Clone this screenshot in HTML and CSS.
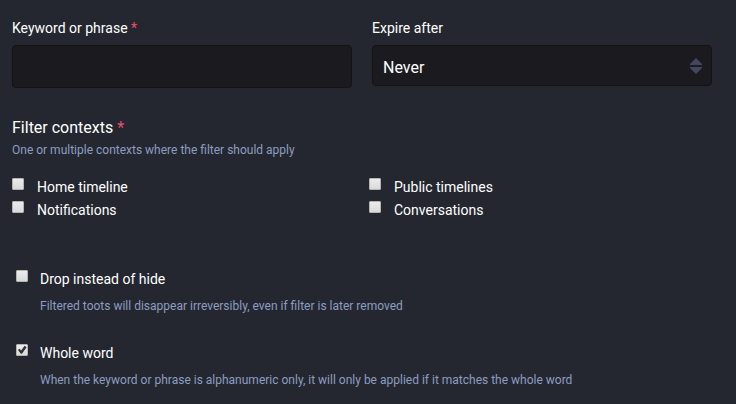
FILE: index.html
```html
<!DOCTYPE html>
<html lang="en">
<head>
<meta charset="utf-8">
<meta name="viewport" content="width=device-width, initial-scale=1">
<title>Edit filter</title>
<link rel="stylesheet" href="styles.css">
</head>
<body>
<form class="form">
  <div class="fields-row">
    <div class="field">
      <label class="label" for="phrase">Keyword or phrase <abbr class="required">*</abbr></label>
      <input class="control control-text" id="phrase" type="text" required>
    </div>
    <div class="field">
      <label class="label" for="expires">Expire after</label>
      <div class="select-wrap">
        <select class="control control-select" id="expires"><option>Never</option></select>
        <svg class="arrows" viewBox="0 0 12 16" width="12" height="16" aria-hidden="true">
          <path d="M6 0 12 6V7H0V6Z M0 10V9H12V10L6 16Z"/>
        </svg>
      </div>
    </div>
  </div>

  <fieldset class="contexts">
    <legend class="legend">Filter contexts <abbr class="required">*</abbr></legend>
    <p class="hint">One or multiple contexts where the filter should apply</p>
    <div class="context-grid">
      <label class="option"><input class="check" type="checkbox"><span>Home timeline</span></label>
      <label class="option"><input class="check" type="checkbox"><span>Public timelines</span></label>
      <label class="option"><input class="check" type="checkbox"><span>Notifications</span></label>
      <label class="option"><input class="check" type="checkbox"><span>Conversations</span></label>
    </div>
  </fieldset>

  <div class="toggle">
    <label class="option"><input class="check" type="checkbox" aria-describedby="drop-hint"><span>Drop instead of hide</span></label>
    <p class="hint toggle-hint" id="drop-hint">Filtered toots will disappear irreversibly, even if filter is later removed</p>
  </div>
  <div class="toggle">
    <label class="option"><input class="check" type="checkbox" checked aria-describedby="word-hint"><span>Whole word</span></label>
    <p class="hint toggle-hint" id="word-hint">When the keyword or phrase is alphanumeric only, it will only be applied if it matches the whole word</p>
  </div>
</form>
</body>
</html>
```
FILE: styles.css
```css
* {
  box-sizing: border-box;
}

body {
  margin: 0;
  background: #242730;
  color: #fff;
  font-family: Roboto, sans-serif;
  font-size: 14px;
  line-height: 18px;
}

.form {
  padding: 19px 24px 0 12px;
}

.fields-row {
  display: grid;
  grid-template-columns: 1fr 1fr;
  gap: 20px;
  align-items: start;
}

.label {
  display: block;
  margin-bottom: 8px;
}

.required {
  color: #ec4c70;
}

.control {
  display: block;
  width: 100%;
  border: 1px solid #131316;
  border-radius: 4px;
  background: #1b1b1f;
  color: #fff;
  font-family: inherit;
  font-size: 16px;
  outline: 0;
}

.control-text {
  height: 43px;
  padding: 10px;
}

.control-select {
  height: 41px;
  padding: 3px 30px 0 10px;
  appearance: none;
}

.select-wrap {
  position: relative;
}

.arrows {
  position: absolute;
  top: 13px;
  right: 10px;
  fill: #44465f;
  pointer-events: none;
}

.contexts {
  min-width: 0;
  margin: 30px 0 0;
  padding: 0;
  border: 0;
}

.legend {
  padding: 0;
  font-size: 16px;
  line-height: 20px;
}

.hint {
  margin: 4px 0 0;
  color: #8c9dc0;
  font-size: 12px;
  line-height: 16px;
}

.context-grid {
  display: grid;
  grid-template-columns: 1fr 1fr;
  gap: 5px 14px;
  margin: 20px 0 51px;
}

.option {
  display: flex;
  align-items: flex-start;
  gap: 13px;
}

.check {
  flex: none;
  width: 12px;
  height: 12px;
  margin: 0;
  border: 1px solid #b4b4b4;
  border-radius: 1px;
  background: linear-gradient(#ebebeb, #dadada);
  appearance: none;
}

.check:checked::before {
  content: "";
  display: block;
  width: 10px;
  height: 10px;
  background: #333;
  clip-path: polygon(10% 50%, 25% 38%, 42% 55%, 76% 8%, 96% 22%, 50% 88%, 38% 88%);
}

.toggle {
  margin-bottom: 30px;
  padding-left: 4px;
}

.toggle .option {
  gap: 12px;
}

.toggle-hint {
  margin: 10px 0 0 24px;
}
```
